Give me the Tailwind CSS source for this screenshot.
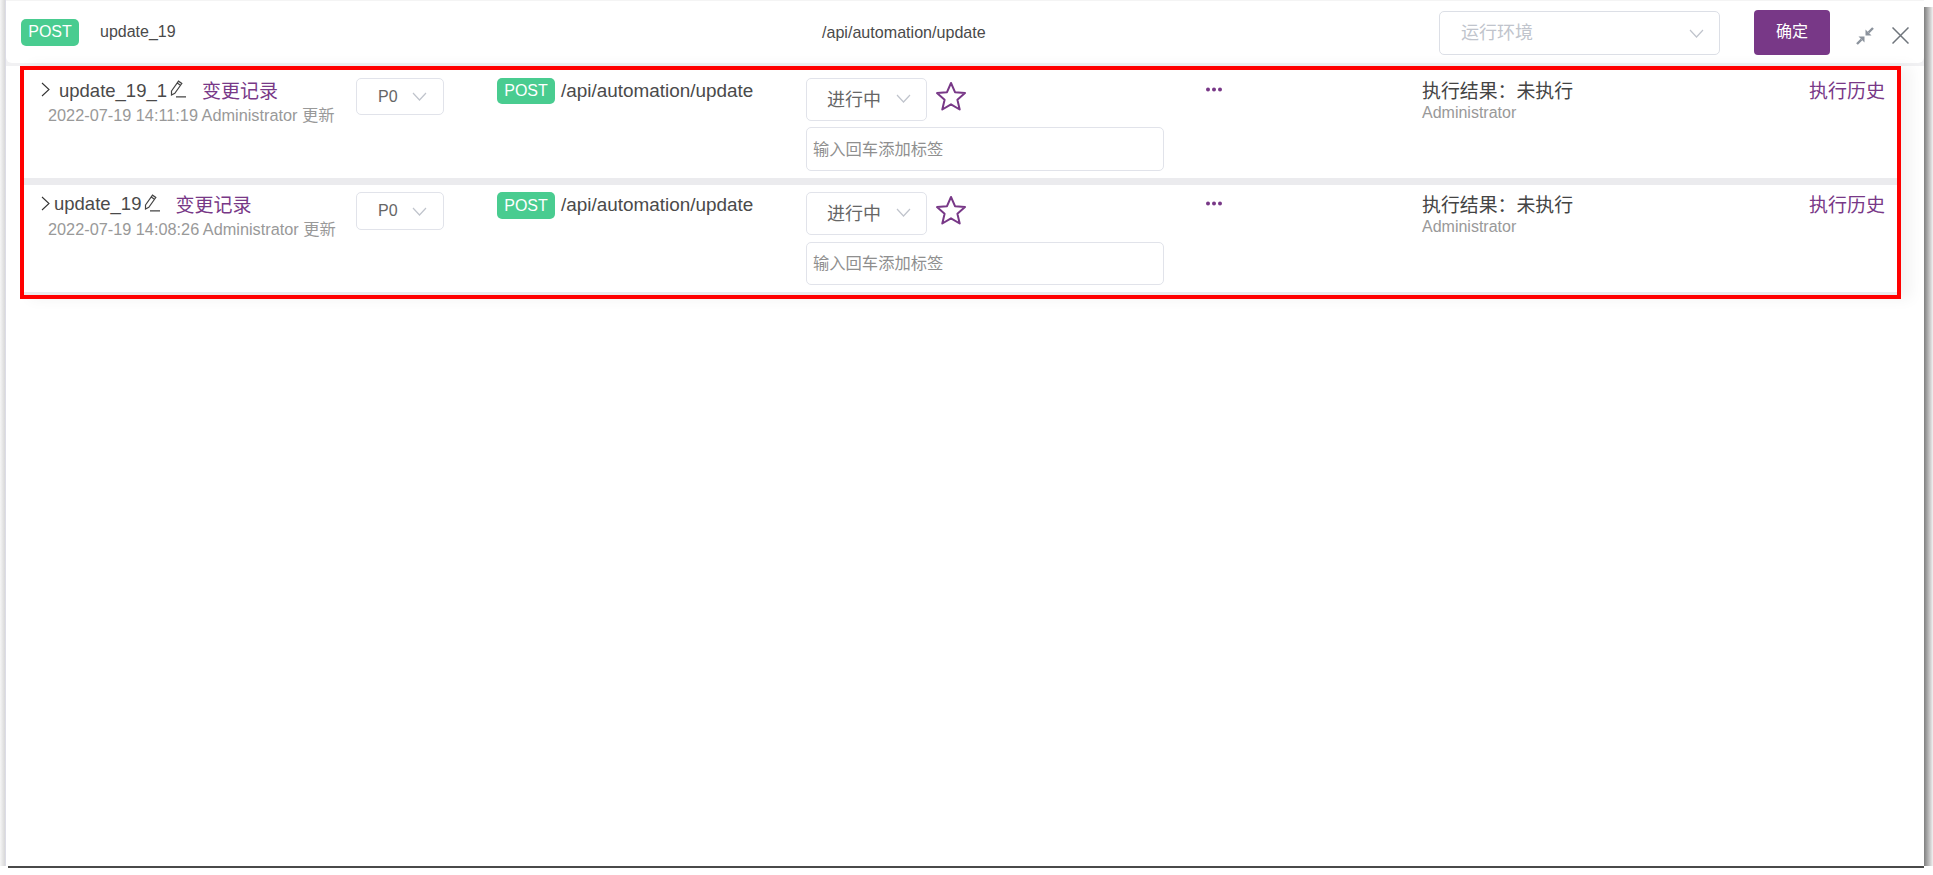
<!DOCTYPE html>
<html lang="en">
  <head>
    <meta charset="UTF-8" />
    <title>Automation update</title>
    <script src="https://cdn.jsdelivr.net/npm/@tailwindcss/browser@4"></script>
  </head>
  <body class="bg-white h-screen overflow-hidden font-['Liberation_Sans','Noto_Sans_CJK_SC',sans-serif]">
    <div class="flex h-[866px]">
      <div class="w-[5px] bg-gradient-to-r from-[#f6f6f6] to-[#d8d8d8]"></div>
      <div class="w-px bg-[#dcdce6]"></div>

      <main class="w-[1918px] flex flex-col bg-white">
        <div class="bg-[#f1f1f3]">
          <div class="h-px bg-[#f4f4f4]"></div>
          <header class="h-[62px] mb-[3px] bg-white rounded-bl-[6px] rounded-br-[6px] flex items-center text-[#4a4a4a] text-[16px]">
            <span class="ml-[15px] w-[58px] h-[27px] rounded-[5px] bg-[#49cc90] text-white flex items-center justify-center">POST</span>
            <span class="ml-[21px] w-[722px]">update_19</span>
            <span class="w-[617px] text-[16.100px]">/api/automation/update</span>
            <div class="mt-[2px] w-[281px] h-[44px] border border-[#dcdfe6] rounded-[5px] flex items-center justify-between pl-[21px] pr-[15px] text-[18px] text-[#c0c4cc]">
              <span>运行环境</span>
              <svg class="w-[15px] h-[9px]" viewBox="0 0 15 9" fill="none" stroke="#c0c4cc" stroke-width="1.200"><path d="M1 1l6.500 7L14 1" /></svg>
            </div>
            <button class="ml-[34px] w-[76px] h-[45px] rounded-[4px] bg-[#783887] text-white text-[16px]">确定</button>
            <svg class="ml-[26px] mt-[7px] w-[18px] h-[18px]" viewBox="0 0 18 18" fill="#8c939d" stroke="#8c939d">
              <path stroke="none" d="M9.500 8.500V2.500l6 6z" />
              <path stroke-width="2.400" d="M12.500 5.500L17 1" />
              <path stroke="none" d="M8.500 9.500v6l-6-6z" />
              <path stroke-width="2.400" d="M5.500 12.500L1 17" />
            </svg>
            <svg class="ml-[18px] mt-[7px] w-[17px] h-[17px]" viewBox="0 0 17 17" fill="none" stroke="#6f757c" stroke-width="1.500"><path d="M.5.500l16 16M16.500.500l-16 16" /></svg>
          </header>
        </div>

        <section class="ml-[14px] w-[1881px] border-4 border-[#ff0000] shadow-[10px_0_14px_rgba(0,0,0,0.05)] bg-white">
          <!-- row 1 -->
          <div class="h-[108px] pt-[8px] flex text-[#4a4a4a]">
            <div class="w-[332px] shrink-0">
              <div class="h-[28px] flex items-center pl-[17px] text-[18.500px]">
                <svg class="w-[9px] h-[15px] -mt-[6px]" viewBox="0 0 9 15" fill="none" stroke="#333" stroke-width="1.100"><path d="M1 1l7 6.500L1 14" /></svg>
                <span class="ml-[9px] -mt-[3px]">update_19_1</span>
                <svg class="ml-[3px] -mt-[7px] w-[16px] h-[18px]" viewBox="0 0 16 18" fill="none" stroke="#444" stroke-width="1.200"><path d="M1.500 11L8.500 1.200l3.300 2.300-7 9.800-3.300 1.700zM7.200 3l3.300 2.300M6 16.800h10" /></svg>
                <span class="ml-[16px] text-[19px] text-[#783887]">变更记录</span>
              </div>
              <div class="-mt-[3px] pl-[24px] text-[16.300px] text-[#999999] leading-[24px] whitespace-nowrap">2022-07-19 14:11:19 Administrator 更新</div>
            </div>
            <div class="w-[141px] shrink-0">
              <div class="w-[88px] h-[37px] border border-[#e1e3ea] rounded-[5px] flex items-center justify-between pl-[21px] pr-[16px] text-[16px] text-[#666666]">
                <span>P0</span>
                <svg class="w-[15px] h-[9px]" viewBox="0 0 15 9" fill="none" stroke="#c0c4cc" stroke-width="1.200"><path d="M1 1l6.500 7L14 1" /></svg>
              </div>
            </div>
            <div class="w-[309px] shrink-0 flex items-start">
              <span class="w-[58px] h-[26px] rounded-[5px] bg-[#49cc90] text-white text-[16px] flex items-center justify-center">POST</span>
              <span class="ml-[6px] text-[18.900px] leading-[26px]">/api/automation/update</span>
            </div>
            <div class="w-[399px] shrink-0 flex flex-col gap-[6px]">
              <div class="flex items-start">
                <div class="w-[121px] h-[43px] border border-[#e1e3ea] rounded-[5px] flex items-center justify-between pl-[20px] pr-[15px] text-[18px] text-[#666666]">
                  <span class="pt-[2px]">进行中</span>
                  <svg class="w-[15px] h-[9px] -mt-[3px]" viewBox="0 0 15 9" fill="none" stroke="#c0c4cc" stroke-width="1.200"><path d="M1 1l6.500 7L14 1" /></svg>
                </div>
                <svg class="ml-[8px] mt-[3px] w-[32px] h-[30px]" viewBox="0 0 32 30" fill="none" stroke="#783887" stroke-width="2" stroke-linejoin="round"><path d="M16 2l4 9.200 10 .9-7.600 6.600 2.300 9.800L16 23.300 7.300 28.500l2.300-9.800L2 12.100l10-.9z" /></svg>
              </div>
              <div class="w-[358px] h-[44px] border border-[#e1e3ea] rounded-[5px] flex items-center pl-[6px] text-[16.300px] text-[#8f8f8f]">输入回车添加标签</div>
            </div>
            <div class="w-[217px] shrink-0 pt-[9px]">
              <svg class="w-[18px] h-[5px]" viewBox="0 0 18 5" fill="#783887"><circle cx="3" cy="2.500" r="2" /><circle cx="9" cy="2.500" r="2" /><circle cx="15" cy="2.500" r="2" /></svg>
            </div>
            <div class="flex-1 flex justify-between pr-[12px] pt-[1px]">
              <div>
                <div class="text-[18.900px] leading-[26px] text-[#444444]">执行结果：未执行</div>
                <div class="text-[16px] leading-[16px] text-[#999999]">Administrator</div>
              </div>
              <span class="text-[19px] leading-[26px] text-[#783887]">执行历史</span>
            </div>
          </div>

          <div class="h-[7px] bg-[#ebebee]"></div>

          <!-- row 2 -->
          <div class="h-[107px] pt-[7px] flex text-[#4a4a4a]">
            <div class="w-[332px] shrink-0">
              <div class="h-[28px] flex items-center pl-[17px] text-[18.500px]">
                <svg class="w-[9px] h-[15px] -mt-[6px]" viewBox="0 0 9 15" fill="none" stroke="#333" stroke-width="1.100"><path d="M1 1l7 6.500L1 14" /></svg>
                <span class="ml-[4px] -mt-[4px]">update_19</span>
                <svg class="ml-[3px] -mt-[7px] w-[16px] h-[18px]" viewBox="0 0 16 18" fill="none" stroke="#444" stroke-width="1.200"><path d="M1.500 11L8.500 1.200l3.300 2.300-7 9.800-3.300 1.700zM7.200 3l3.300 2.300M6 16.800h10" /></svg>
                <span class="ml-[15px] text-[19px] text-[#783887]">变更记录</span>
              </div>
              <div class="-mt-[3px] pl-[24px] text-[16.300px] text-[#999999] leading-[24px] whitespace-nowrap">2022-07-19 14:08:26 Administrator 更新</div>
            </div>
            <div class="w-[141px] shrink-0">
              <div class="w-[88px] h-[38px] border border-[#e1e3ea] rounded-[5px] flex items-center justify-between pl-[21px] pr-[16px] text-[16px] text-[#666666]">
                <span>P0</span>
                <svg class="w-[15px] h-[9px]" viewBox="0 0 15 9" fill="none" stroke="#c0c4cc" stroke-width="1.200"><path d="M1 1l6.500 7L14 1" /></svg>
              </div>
            </div>
            <div class="w-[309px] shrink-0 flex items-start">
              <span class="w-[58px] h-[27px] rounded-[5px] bg-[#49cc90] text-white text-[16px] flex items-center justify-center">POST</span>
              <span class="ml-[6px] text-[18.900px] leading-[26px]">/api/automation/update</span>
            </div>
            <div class="w-[399px] shrink-0 flex flex-col gap-[7px]">
              <div class="flex items-start">
                <div class="w-[121px] h-[43px] border border-[#e1e3ea] rounded-[5px] flex items-center justify-between pl-[20px] pr-[15px] text-[18px] text-[#666666]">
                  <span class="pt-[2px]">进行中</span>
                  <svg class="w-[15px] h-[9px] -mt-[3px]" viewBox="0 0 15 9" fill="none" stroke="#c0c4cc" stroke-width="1.200"><path d="M1 1l6.500 7L14 1" /></svg>
                </div>
                <svg class="ml-[8px] mt-[3px] w-[32px] h-[30px]" viewBox="0 0 32 30" fill="none" stroke="#783887" stroke-width="2" stroke-linejoin="round"><path d="M16 2l4 9.200 10 .9-7.600 6.600 2.300 9.800L16 23.300 7.300 28.500l2.300-9.800L2 12.100l10-.9z" /></svg>
              </div>
              <div class="w-[358px] h-[43px] border border-[#e1e3ea] rounded-[5px] flex items-center pl-[6px] text-[16.300px] text-[#8f8f8f]">输入回车添加标签</div>
            </div>
            <div class="w-[217px] shrink-0 pt-[9px]">
              <svg class="w-[18px] h-[5px]" viewBox="0 0 18 5" fill="#783887"><circle cx="3" cy="2.500" r="2" /><circle cx="9" cy="2.500" r="2" /><circle cx="15" cy="2.500" r="2" /></svg>
            </div>
            <div class="flex-1 flex justify-between pr-[12px] pt-[1px]">
              <div>
                <div class="text-[18.900px] leading-[26px] text-[#444444]">执行结果：未执行</div>
                <div class="text-[16px] leading-[16px] text-[#999999]">Administrator</div>
              </div>
              <span class="text-[19px] leading-[26px] text-[#783887]">执行历史</span>
            </div>
          </div>
          <div class="h-[3px] bg-[#ebebee]"></div>
        </section>
      </main>

      <div class="w-[9px] mt-[7px] bg-gradient-to-r from-[#7f7f7f] to-[#f2f2f2]"></div>
    </div>
    <div class="ml-[8px] w-[1916px] h-[2px] bg-[#4a4a4a]"></div>
  </body>
</html>
